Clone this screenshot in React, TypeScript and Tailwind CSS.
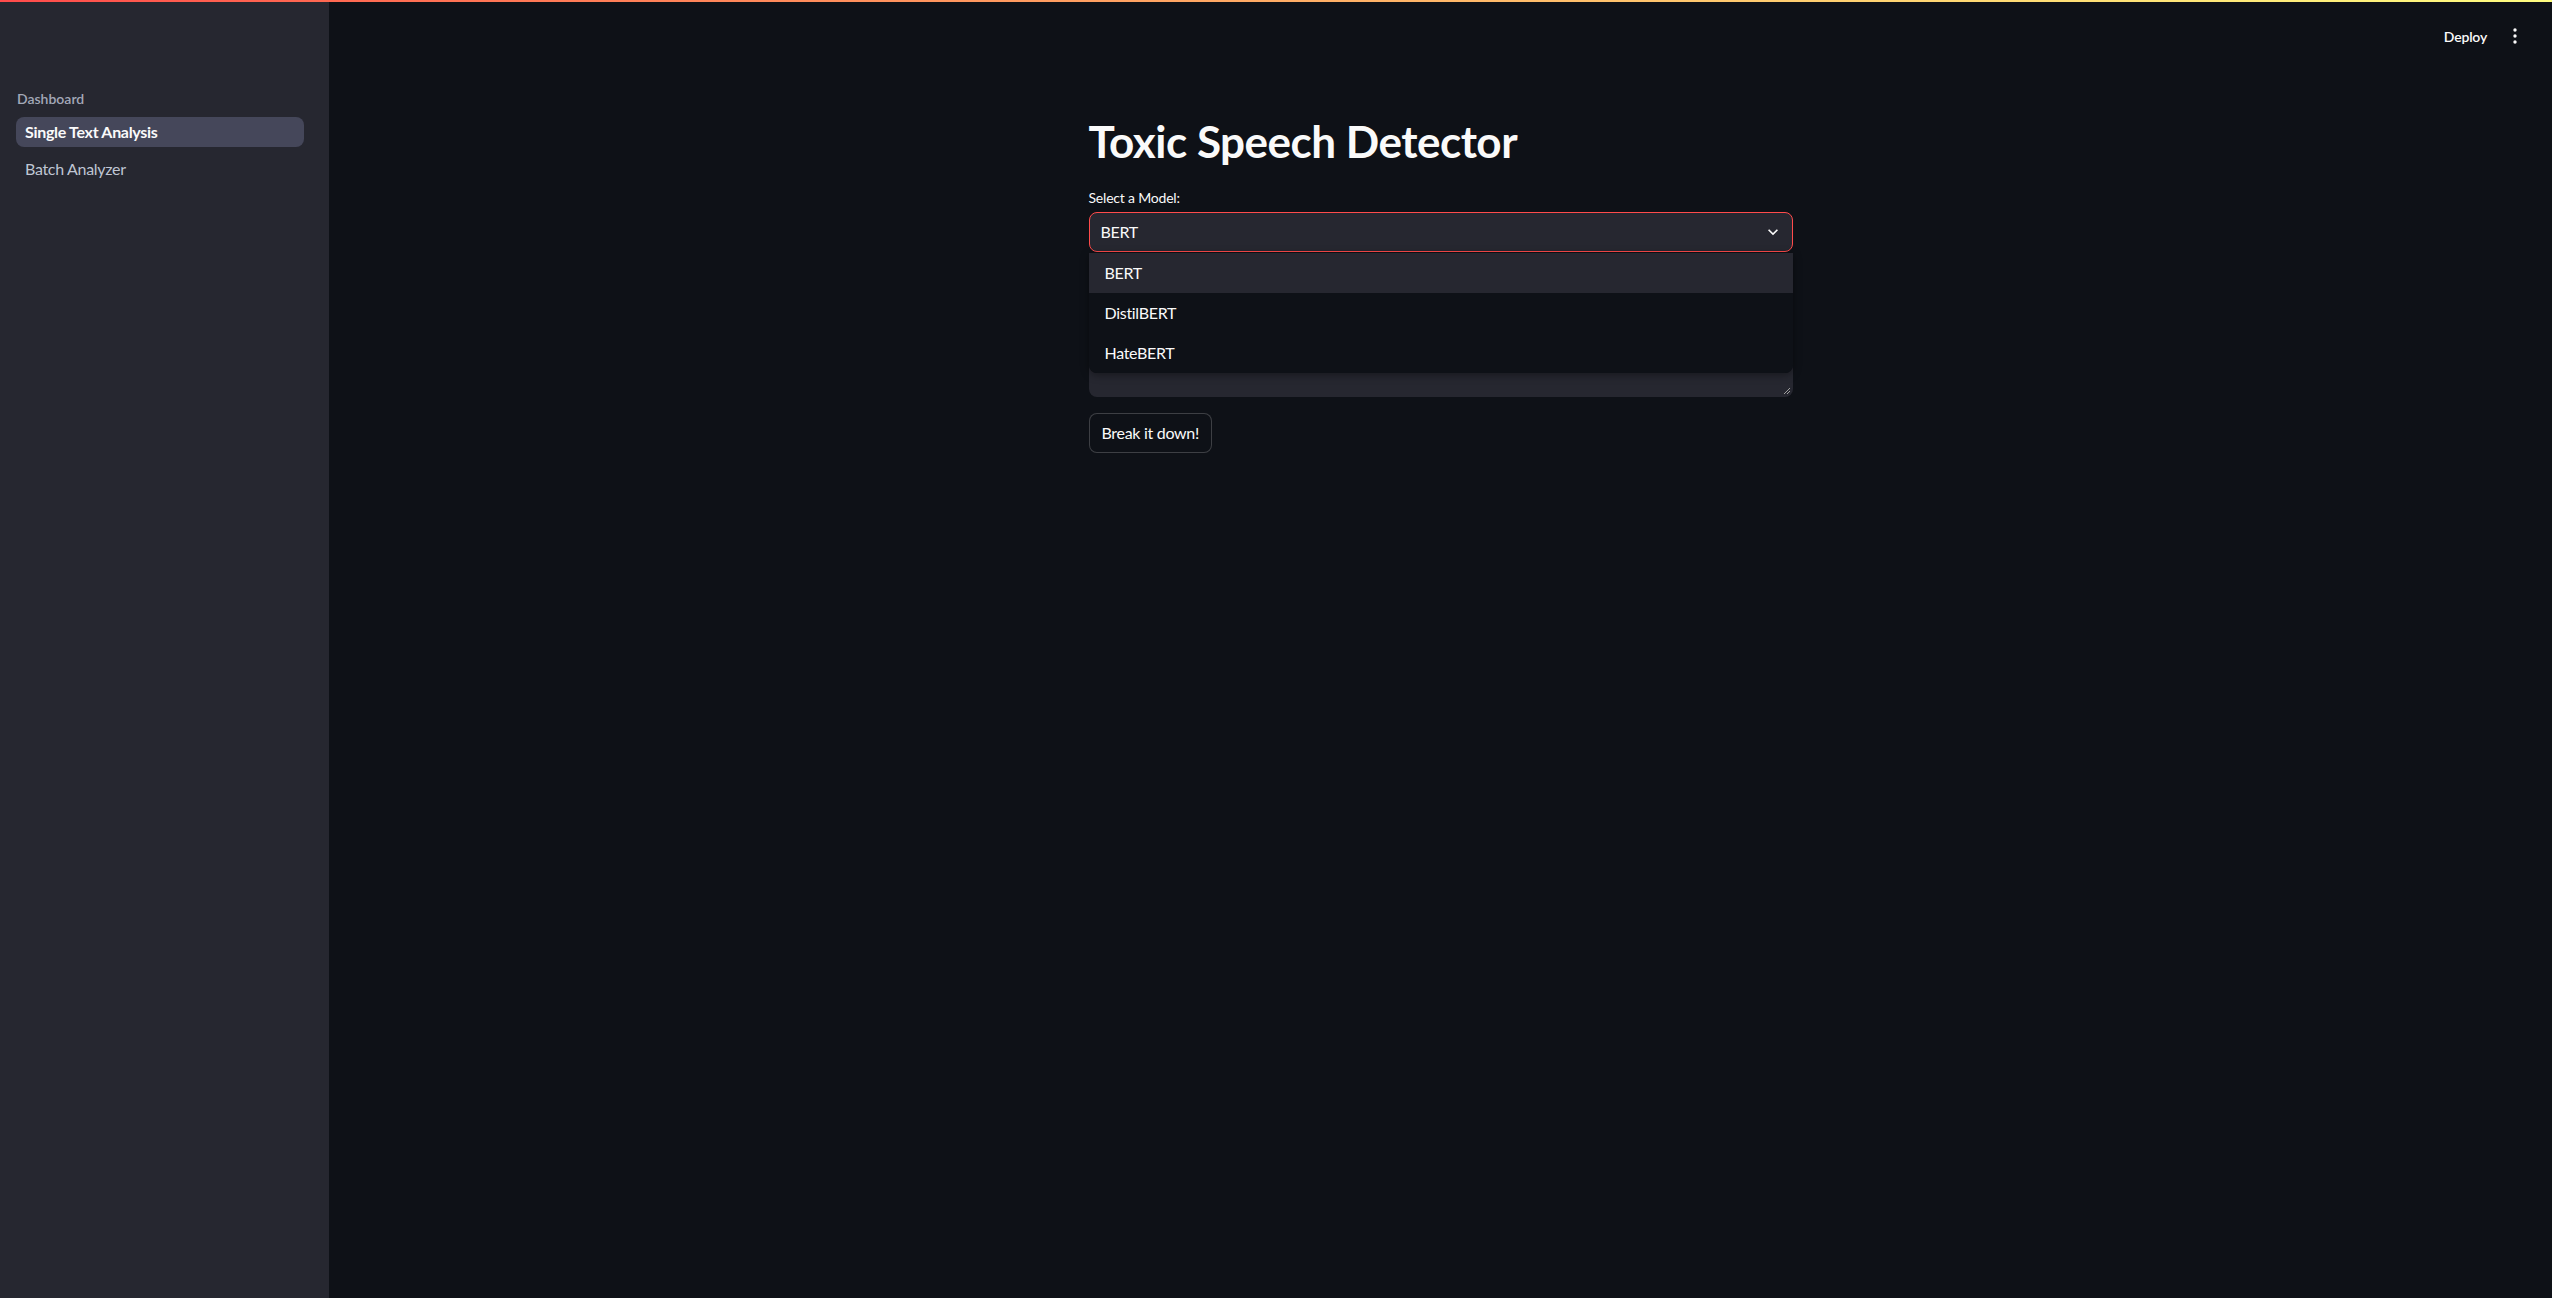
import { useState } from "react";

const models = ["BERT", "DistilBERT", "HateBERT"];

export default function App() {
  const [model, setModel] = useState<string>("BERT");
  const [open, setOpen] = useState<boolean>(true);
  const [text, setText] = useState<string>("");

  return (
    <div
      className="relative flex h-[1298px] w-full overflow-hidden bg-[#0e1117] text-[#fafafa]"
      style={{ fontFamily: "Lato, 'Noto Sans', sans-serif" }}
    >
      {/* top decoration */}
      <div className="absolute left-0 right-0 top-0 z-20 h-[2px] bg-gradient-to-r from-[#ff4b4b] to-[#fffd80]" />

      {/* sidebar */}
      <aside className="flex h-full w-[329px] shrink-0 flex-col bg-[#262730] px-4 pt-[88px]">
        <div className="pl-[1px] text-[14px] font-semibold leading-[21px] text-[#a3a8b8]">
          Dashboard
        </div>
        <nav className="mt-[8px] flex flex-col gap-[7px] pr-[9px]">
          <a className="flex h-[30px] items-center rounded-lg bg-[#45475a] px-[9px] text-[16px] font-bold tracking-[-0.3px] text-[#fafafa]">
            Single Text Analysis
          </a>
          <a className="flex h-[30px] items-center rounded-lg px-[9px] text-[16px] tracking-[-0.3px] text-[#bfc5d3]">
            Batch Analyzer
          </a>
        </nav>
      </aside>

      {/* main */}
      <main className="flex flex-1 flex-col">
        <header className="flex h-[60px] items-center justify-end gap-[26px] pr-[35px] pt-[12px]">
          <span className="text-[14px] font-semibold tracking-[-0.2px] text-[#fafafa]">Deploy</span>
          <svg width="4" height="16" viewBox="0 0 4 16" className="fill-[#fafafa]">
            <circle cx="2" cy="2" r="1.7" />
            <circle cx="2" cy="8" r="1.7" />
            <circle cx="2" cy="14" r="1.7" />
          </svg>
        </header>

        <div className="mx-auto w-[704px]">
          <h1 className="mt-[55px] text-[44px] font-bold leading-[53px] tracking-[-0.5px]">
            Toxic Speech Detector
          </h1>

          <label className="mt-[19px] block text-[14px] leading-[21px] tracking-[-0.2px]">
            Select a Model:
          </label>
          <div className="relative mt-[4px]">
            <button
              onClick={() => setOpen(!open)}
              className="flex h-[40px] w-full items-center justify-between rounded-lg border border-[#ff4b4b] bg-[#262730] pl-[11px] pr-[9px] text-[16px] tracking-[-0.3px]"
            >
              <span>{model}</span>
              <svg width="20" height="20" viewBox="0 0 24 24" className="fill-[#fafafa]">
                <path d="M7.41 8.59 12 13.17l4.59-4.58L18 10l-6 6-6-6z" />
              </svg>
            </button>
            {open && (
              <ul className="absolute left-0 right-0 top-[41px] z-10 overflow-hidden rounded-b-lg bg-[#0e1117] shadow-[0_2px_8px_rgba(0,0,0,0.4)]">
                {models.map((m) => (
                  <li
                    key={m}
                    onClick={() => {
                      setModel(m);
                      setOpen(false);
                    }}
                    className={`flex h-[40px] items-center px-[16px] text-[16px] tracking-[-0.3px] ${
                      m === model ? "bg-[#262730]" : "bg-[#0e1117]"
                    }`}
                  >
                    {m}
                  </li>
                ))}
              </ul>
            )}
          </div>

          {/* text area (its label sits under the open menu) */}
          <div className="mt-[16px] h-[21px]" />
          <div className="relative mt-[4px]">
            <textarea
              value={text}
              onChange={(e) => setText(e.target.value)}
              className="block h-[104px] w-full resize-none rounded-lg bg-[#262730] px-3 py-2 text-[16px] outline-none"
            />
            <svg width="8" height="8" viewBox="0 0 8 8" className="absolute bottom-[2px] right-[2px] stroke-[#a0a0a0]">
              <path d="M7 1 1 7M7 4 4 7" strokeWidth="1" />
            </svg>
          </div>

          <button className="mt-[16px] flex h-[40px] items-center rounded-lg border border-[#fafafa33] bg-[#0e1117] px-[12px] text-[16px] tracking-[-0.3px]">
            Break it down!
          </button>
        </div>
      </main>
    </div>
  );
}
